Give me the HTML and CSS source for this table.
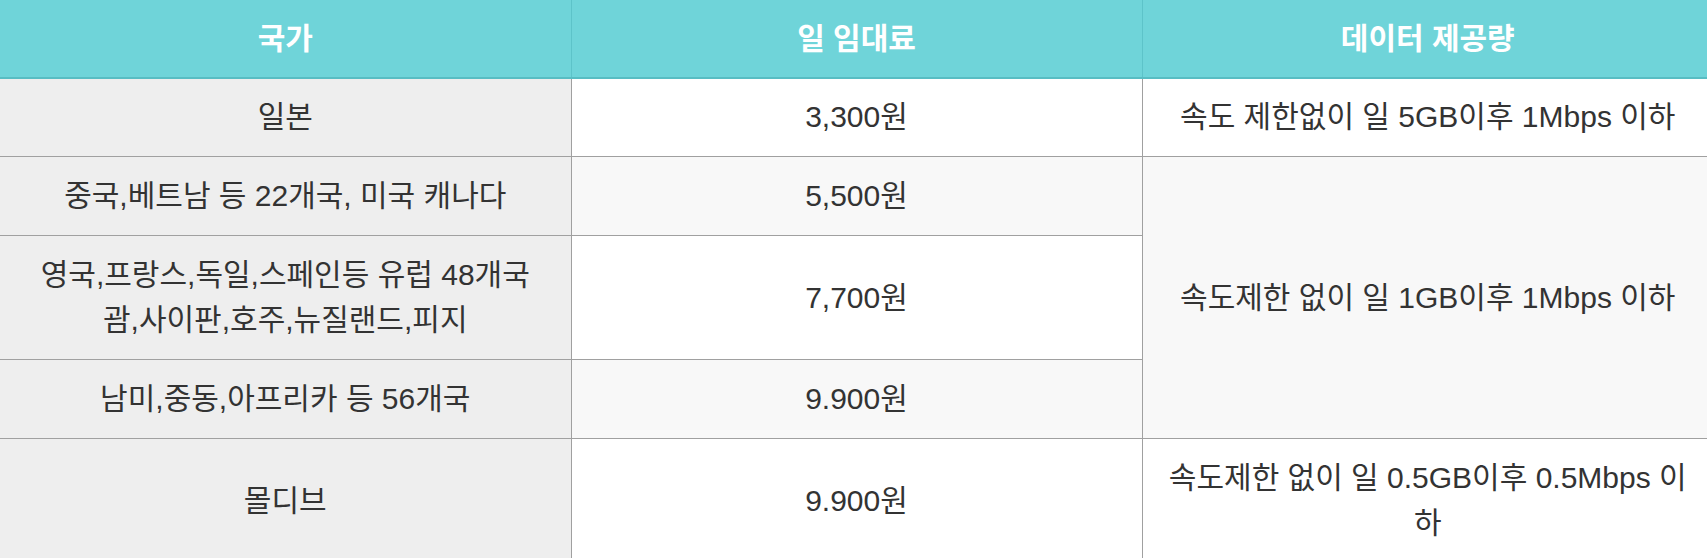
FILE: index.html
```html
<!DOCTYPE html>
<html lang="ko">
<head>
<meta charset="utf-8">
<title>요금표</title>
<link rel="stylesheet" href="styles.css">
</head>
<body>
<table class="rate-table">
  <colgroup>
    <col class="col-country">
    <col class="col-price">
    <col class="col-data">
  </colgroup>
  <thead>
    <tr>
      <th>국가</th>
      <th>일 임대료</th>
      <th>데이터 제공량</th>
    </tr>
  </thead>
  <tbody>
    <tr class="row-odd row-first">
      <td class="country">일본</td>
      <td>3,300원</td>
      <td>속도 제한없이 일 5GB이후 1Mbps 이하</td>
    </tr>
    <tr class="row-even">
      <td class="country">중국,베트남 등 22개국, 미국 캐나다</td>
      <td>5,500원</td>
      <td rowspan="3">속도제한 없이 일 1GB이후 1Mbps 이하</td>
    </tr>
    <tr class="row-odd">
      <td class="country">영국,프랑스,독일,스페인등 유럽 48개국 괌,사이판,호주,뉴질랜드,피지</td>
      <td>7,700원</td>
    </tr>
    <tr class="row-even">
      <td class="country">남미,중동,아프리카 등 56개국</td>
      <td>9.900원</td>
    </tr>
    <tr class="row-odd">
      <td class="country">몰디브</td>
      <td>9.900원</td>
      <td>속도제한 없이 일 0.5GB이후 0.5Mbps 이하</td>
    </tr>
  </tbody>
</table>
</body>
</html>
```

FILE: styles.css
```css
html, body {
  margin: 0;
  padding: 0;
  background: #ffffff;
  overflow: hidden;
}

body {
  font-family: "Liberation Sans", "Noto Sans CJK KR", sans-serif;
  font-size: 30px;
  color: #333333;
}

.rate-table {
  width: 1713px;
  table-layout: fixed;
  border-collapse: collapse;
  border-spacing: 0;
}

.col-country,
.col-price,
.col-data {
  width: 33.333%;
}

.rate-table th,
.rate-table td {
  text-align: center;
  vertical-align: middle;
  line-height: 45px;
  padding: 16px 24px 17px;
}

.rate-table th {
  background: #6fd4d9;
  color: #ffffff;
  font-weight: bold;
  padding-bottom: 16px;
  border-bottom: 2px solid #58bdc3;
  border-left: 1px solid #5dc3c9;
}

.rate-table td {
  border: 1px solid #a0a0a0;
  background: #ffffff;
}

.rate-table .row-first td {
  padding-top: 15px;
}

.rate-table th:first-child,
.rate-table td.country {
  border-left: none;
}

.rate-table tr > :last-child {
  border-right: none;
}

.rate-table tbody tr:first-child td {
  border-top: none;
}

.rate-table .row-even td {
  background: #f8f8f8;
}

.rate-table td.country,
.rate-table .row-even td.country {
  background: #eeeeee;
}
```
